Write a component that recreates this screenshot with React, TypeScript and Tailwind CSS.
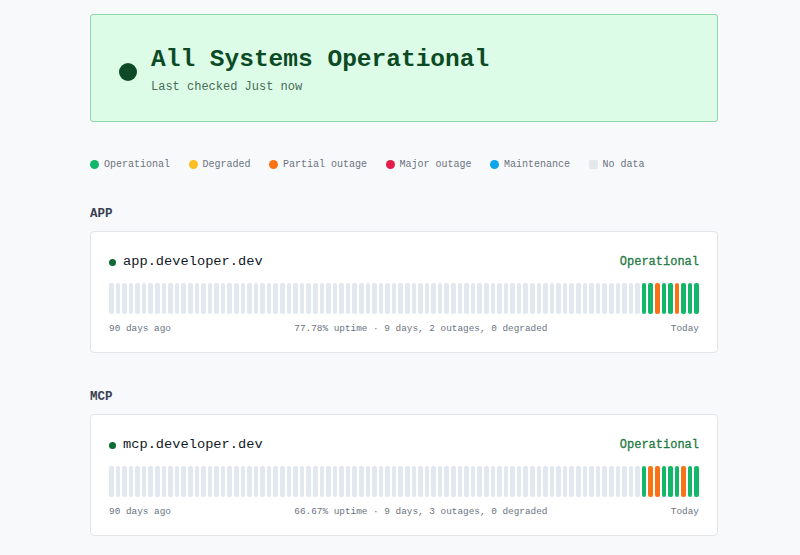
const mono = "font-['Liberation_Mono','DejaVu_Sans_Mono',monospace]";

const legend = [
  { label: "Operational", color: "bg-[#12b76a]", shape: "rounded-full" },
  { label: "Degraded", color: "bg-[#fbbf24]", shape: "rounded-full" },
  { label: "Partial outage", color: "bg-[#f97316]", shape: "rounded-full" },
  { label: "Major outage", color: "bg-[#e11d48]", shape: "rounded-full" },
  { label: "Maintenance", color: "bg-[#0ea5e9]", shape: "rounded-full" },
  { label: "No data", color: "bg-[#e5e7eb]", shape: "rounded-[2px]" },
];

type Day = "none" | "ok" | "partial";

const services: { group: string; host: string; recent: Day[]; summary: string }[] = [
  {
    group: "APP",
    host: "app.developer.dev",
    recent: ["ok", "ok", "partial", "ok", "ok", "partial", "ok", "ok", "ok"],
    summary: "77.78% uptime · 9 days, 2 outages, 0 degraded",
  },
  {
    group: "MCP",
    host: "mcp.developer.dev",
    recent: ["ok", "partial", "partial", "ok", "ok", "ok", "partial", "ok", "ok"],
    summary: "66.67% uptime · 9 days, 3 outages, 0 degraded",
  },
];

const barColor: Record<Day, string> = {
  none: "bg-[#e2e8f0]",
  ok: "bg-[#12b76a]",
  partial: "bg-[#f97316]",
};

function ServiceCard({ host, recent, summary }: { host: string; recent: Day[]; summary: string }) {
  const days: Day[] = [...Array(90 - recent.length).fill("none"), ...recent];
  return (
    <div className="bg-white border border-[#e2e5ea] rounded-[4px] px-[18px] pt-[20px] pb-[17px]">
      <div className="flex items-center justify-between h-[20px]">
        <div className="flex items-center gap-[7px]">
          <span className="w-[7px] h-[7px] rounded-full bg-[#0f6b35]" />
          <span className="text-[13.7px] text-[#111827]">{host}</span>
        </div>
        <span className="text-[12px] text-[#1f7a45] [-webkit-text-stroke:0.3px_#1f7a45]">Operational</span>
      </div>
      <div className="flex gap-[2px] h-[31px] mt-[11px]">
        {days.map((d, i) => (
          <div key={i} className={`flex-1 rounded-[2px] ${barColor[d]}`} />
        ))}
      </div>
      <div className="flex justify-between mt-[9px] text-[9.4px] leading-[12px] text-[#6b7280]">
        <span>90 days ago</span>
        <span>{summary}</span>
        <span>Today</span>
      </div>
    </div>
  );
}

export default function App() {
  return (
    <div className={`min-h-[555px] bg-[#f8f9fb] pt-[14px] pb-[20px] ${mono}`}>
      <div className="ml-[90px] w-[628px]">
        <div className="h-[108px] bg-[#dcfce7] border border-[#8fd6a8] rounded-[3px] flex items-center pl-[28px] gap-[14px]">
          <span className="w-[18px] h-[18px] rounded-full bg-[#0c4a25] mt-[8px]" />
          <div className="pt-[4px]">
            <h1 className="text-[24.5px] leading-[30px] font-bold text-[#0c4a25]">All Systems Operational</h1>
            <p className="text-[12px] leading-[16px] mt-[4px] text-[#4b6b57]">Last checked Just now</p>
          </div>
        </div>

        <div className="flex items-center gap-[18.5px] mt-[35px] h-[14px]">
          {legend.map((l) => (
            <div key={l.label} className="flex items-center gap-[5px]">
              <span className={`w-[9px] h-[9px] ${l.shape} ${l.color}`} />
              <span className="text-[10px] text-[#6b7280]">{l.label}</span>
            </div>
          ))}
        </div>

        {services.map((s, i) => (
          <div key={s.host} className={i === 0 ? "mt-[36px]" : "mt-[37px]"}>
            <h2 className="text-[12.5px] leading-[14px] font-bold text-[#374151] mb-[10px]">{s.group}</h2>
            <ServiceCard host={s.host} recent={s.recent} summary={s.summary} />
          </div>
        ))}
      </div>
    </div>
  );
}
